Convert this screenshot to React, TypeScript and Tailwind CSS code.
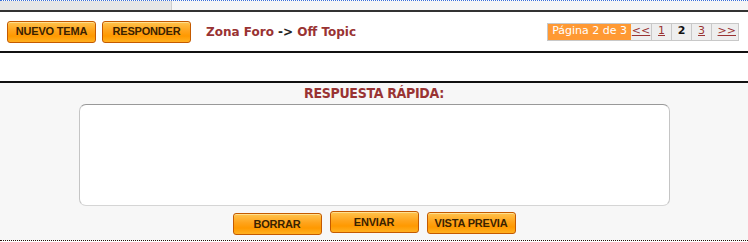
import React from 'react'

const btn =
  'flex h-[22px] w-[89px] items-center justify-center rounded-[3px] border border-[#c45a00] bg-[linear-gradient(to_bottom,#ffc34d_0%,#ffa31a_45%,#ff9900_70%,#ffb020_100%)] font-["Liberation_Sans",Arial,sans-serif] text-[11px] font-bold tracking-[-0.2px] text-[#3a2200] shadow-[inset_0_1px_0_rgba(255,230,160,0.8)]'

export default function App() {
  return (
    <div className="h-[242px] w-[748px] overflow-hidden bg-white font-['DejaVu_Sans',Verdana,sans-serif]">
      {/* top strip */}
      <div className="flex h-[12px] flex-col border-b-2 border-[#333]">
        <div className="border-t border-dotted border-[#3a6fd8]" />
        <div className="flex flex-1">
          <div className="w-[172px] border-r border-[#cfcfcf] bg-[#e6e6e6]" />
          <div className="flex-1 bg-[#f5f5f5]" />
        </div>
      </div>

      {/* toolbar */}
      <div className="flex h-[41px] items-center border-b-2 border-[#111] pl-[7px] pr-[9px]">
        <button className={btn}>NUEVO TEMA</button>
        <button className={btn + ' ml-[6px]'}>RESPONDER</button>
        <div className="ml-[15px] text-[12px] font-bold text-[#993333]">
          Zona Foro <span className="text-[#222]">-&gt;</span> Off Topic
        </div>
        <div className="ml-auto flex h-[18px] border border-[#c8c8c8] text-[11px]">
          <div className="flex items-center bg-[#ff9933] px-[4px] text-white">Página 2 de 3</div>
          <a className="flex w-[21px] items-center justify-center border-r border-[#c8c8c8] bg-[#eeeeee] text-[#993333] underline">&lt;&lt;</a>
          <a className="flex w-[20px] items-center justify-center border-r border-[#c8c8c8] bg-[#eeeeee] text-[#993333] underline">1</a>
          <div className="flex w-[20px] items-center justify-center border-r border-[#c8c8c8] bg-[#eeeeee] font-bold text-[#111]">2</div>
          <a className="flex w-[20px] items-center justify-center border-r border-[#c8c8c8] bg-[#eeeeee] text-[#993333] underline">3</a>
          <a className="flex w-[26px] items-center justify-end bg-[#eeeeee] pr-[2px] text-[#993333] underline">&gt;&gt;</a>
        </div>
      </div>

      <div className="h-[30px] border-b-2 border-[#111]" />

      {/* quick reply */}
      <div className="flex h-[158px] flex-col items-center border-b border-dotted border-[#2a1008] bg-[#f7f7f7]">
        <div className="mt-[2px] font-['DejaVu_Sans_Condensed','DejaVu_Sans',sans-serif] text-[14px] font-bold leading-[16px] tracking-[-0.3px] text-[#993333]">
          RESPUESTA RÁPIDA:
        </div>
        <textarea className="mt-[3px] h-[102px] w-[591px] resize-none rounded-[7px] border border-[#c5c5c5] border-t-[#999] border-b-[#d5d5d5] bg-white outline-none" />
        <div className="mt-[5px] flex gap-[8px]">
          <button className={btn + ' mt-[2px]'}>BORRAR</button>
          <button className={btn}>ENVIAR</button>
          <button className={btn + ' mt-[1px]'}>VISTA PREVIA</button>
        </div>
      </div>
    </div>
  )
}
